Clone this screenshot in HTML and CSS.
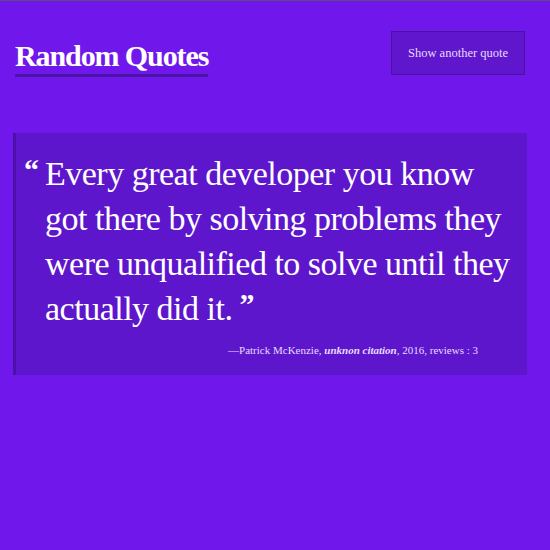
FILE: index.html
```html
<!DOCTYPE html>
<html>
<head>
<meta charset="utf-8">
<link rel="stylesheet" href="styles.css">
</head>
<body>
<header class="top">
  <h1 class="title">Random Quotes</h1>
  <button class="btn">Show another quote</button>
</header>
<main class="card">
  <blockquote class="quote">
    <p class="text">Every great developer you know got there by solving problems they were unqualified to solve until they actually did it.</p>
    <footer class="cite">—Patrick McKenzie, <cite>unknon citation</cite>, 2016, reviews : 3</footer>
  </blockquote>
</main>
</body>
</html>
```
FILE: styles.css
```css
html, body { margin: 0; padding: 0; }
body {
  background: #7018eb;
  border-top: 1px solid #5c4a80;
  min-height: 549px;
  font-family: "Liberation Serif", "DejaVu Serif", serif;
  color: #fff;
}
.top {
  display: flex;
  justify-content: space-between;
  align-items: flex-start;
  padding: 30px 25px 0 15px;
}
.title {
  margin: 8px 0 0 0;
  font-size: 30px;
  font-weight: bold;
  letter-spacing: -1.1px;
  line-height: 34px;
  border-bottom: 3px solid #4c14a6;
  padding-bottom: 1px;
}
.btn {
  width: 134px;
  height: 44px;
  background: #5f16cc;
  border: 1px solid #4a12a0;
  color: #e6dcff;
  font-family: inherit;
  font-size: 12.5px;
  padding: 0;
}
.card {
  margin: 56px 23px 0 13px;
  background: #5e16cd;
  border-left: 3px solid #4c12a8;
  height: 242px;
  box-sizing: border-box;
}
.quote { margin: 0; padding: 18px 4px 0 29px; }
.text {
  margin: 0;
  font-size: 34px;
  letter-spacing: -0.5px;
  line-height: 45px;
  position: relative;
}
.text::before,
.text::after { font-weight: bold; font-size: 30px; line-height: 20px; }
.text::before { content: "“"; position: absolute; left: -21px; top: 9px; }
.text::after { content: "”"; margin-left: 7px; vertical-align: 6px; }
.cite {
  text-align: right;
  font-size: 11px;
  color: #e6dcff;
  margin-top: 13px;
  padding-right: 45px;
}
.cite cite { font-weight: bold; }
```
